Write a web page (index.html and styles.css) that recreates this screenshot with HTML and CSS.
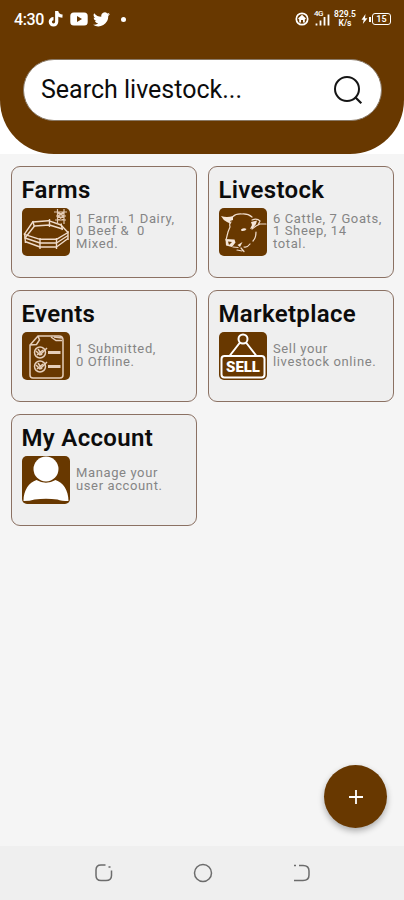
FILE: index.html
```html
<!DOCTYPE html>
<html lang="en">
<head>
  <meta charset="UTF-8" />
  <meta name="viewport" content="width=device-width, initial-scale=1.0"/>
  <title>Livestock</title>
  <link rel="stylesheet" href="styles.css">
</head>
<body>
  <div class="app">
    <div class="header-wrap">
      <header class="header">
        <div class="status-bar">
          <span class="time">4:30</span>
          <svg class="tiktok" width="16" height="18" viewBox="0 0 16 18"><path d="M8.7 1v10.8a3.2 3.2 0 1 1-3.2-3.2M8.7 1.2c.4 3 2.6 4.8 5.8 5" fill="none" stroke="#fff" stroke-width="3.2"/></svg>
          <svg class="youtube" width="18" height="14" viewBox="0 0 18 14"><rect x=".3" y=".5" width="17.4" height="13" rx="3.5" fill="#fff"/><path d="M7 4v6l5-3z" fill="#683800"/></svg>
          <svg class="twitter" width="17" height="15" viewBox="0 0 24 20"><path d="M24 2.4a10 10 0 0 1-2.8.8A5 5 0 0 0 23.3.5a10 10 0 0 1-3.1 1.2 4.9 4.9 0 0 0-8.4 4.5A14 14 0 0 1 1.7 1a4.9 4.9 0 0 0 1.5 6.6 5 5 0 0 1-2.2-.6 4.9 4.9 0 0 0 3.9 4.9 5 5 0 0 1-2.2.1 4.9 4.9 0 0 0 4.6 3.4A10 10 0 0 1 0 17.5 14 14 0 0 0 21.5 5a10 10 0 0 0 2.5-2.6z" fill="#fff"/></svg>
          <span class="dot"></span>
          <div class="status-right">
            <svg width="14" height="14" viewBox="0 0 14 14"><circle cx="7" cy="7" r="5.7" fill="none" stroke="#fff" stroke-width="1.7"/><path d="M7 2.8l4 3.8-1.200.8v3H8V8H6v2.400H4.200v-3L3 6.600z" fill="#fff"/></svg>
            <div class="signal">
              <span>4G</span>
              <svg width="17" height="16" viewBox="0 0 17 16"><path d="M2.5 12.5v2M6.500 9.500v5M10.500 6v8.500M14.500 3.500v11" stroke="#fff" stroke-width="1.800" fill="none"/></svg>
            </div>
            <div class="speed">829.5<br>K/s</div>
            <div class="battery">
              <svg width="8" height="12" viewBox="0 0 8 12"><path d="M4.500 1L.5 6.800h2.200L1.800 11 6.500 5.200H4z" fill="#fff"/></svg>
              <span class="battery-tip"></span>
              <span class="battery-body">15</span>
            </div>
          </div>
        </div>
        <div class="search">
          <span>Search livestock...</span>
          <svg width="30" height="30" viewBox="0 0 30 30"><circle cx="14" cy="14" r="12" fill="none" stroke="#151515" stroke-width="2"/><path d="M22.300 22.300l6 6" stroke="#151515" stroke-width="2.200"/></svg>
        </div>
      </header>
    </div>

    <main class="cards">
      <section class="card">
        <h2>Farms</h2>
        <div class="card-row">
          <svg class="icon" viewBox="0 0 48 48">
            <g fill="none" stroke="#f0dccb" stroke-width="1.400" stroke-linejoin="round">
              <path d="M10.700 14L26.500 12.700 39 17 46 24.500 34.500 31.300H18L2.300 26.300z"/>
              <path d="M12.500 18l15-1 13 4M46 30.500L34.500 39H18L3 33.500"/>
              <path d="M46 27.500L34.500 35H18L3 30l9.500-12"/>
              <path d="M10.700 13l1.800 6M27.500 11v8M39 15.500l1.500 6.500M46 23v9M34.500 30v11M18 30v11M2.500 25l1 10"/>
            </g>
            <g fill="none" stroke="#e3c9b2" stroke-width="1.200">
              <path d="M35.500 1v15M42 1v15M32 4h13M34 8h10M33 12h11M35.500 4l6.500 4-6.500 4M42 4l-6.500 4 6.500 4"/>
            </g>
          </svg>
          <p>1 Farm. 1 Dairy,<br>0 Beef &amp;&nbsp; 0<br>Mixed.</p>
        </div>
      </section>

      <section class="card">
        <h2>Livestock</h2>
        <div class="card-row">
          <svg class="icon" viewBox="0 0 48 48">
            <g fill="#f5e6d9">
              <path d="M2 8q6 2 12 0v4l-3 1 1 3-4-2q-4-2-6-6z"/>
              <path d="M32 14l6-1.500-1 3.500-3 4-3 1 2-4z"/>
              <path d="M22 21.500q3-2 5.500-.5-1 2.500-5 2z"/>
              <path d="M6.500 31l9 .5 1 3-3.500 4.500-6-1.500z"/>
              <path d="M18.500 37l5-3-2.500 5z"/>
            </g>
            <path d="M9 33.500l4 .5-3 3z" fill="#683800"/>
            <g fill="none" stroke="#f0dccb" stroke-width="1.200" stroke-linecap="round">
              <path d="M14 8.500q3-3 9-2.500 6-.5 10 3"/>
              <path d="M12 14q-2 1-1 5l-2 5-2 8"/>
              <path d="M33 21l4-3 4-2h6M33 12q5-2 8 1l-2 4"/>
              <path d="M37 24q0 6-3 9M31 36q-3 4-6 3"/>
              <path d="M14 39l5 .5M18 42l5 1M22 40l3 3.500"/>
            </g>
          </svg>
          <p>6 Cattle, 7 Goats,<br>1 Sheep, 14<br>total.</p>
        </div>
      </section>

      <section class="card">
        <h2>Events</h2>
        <div class="card-row">
          <svg class="icon" viewBox="0 0 48 48">
            <g fill="none" stroke="#e6cfba" stroke-width="1.500">
              <path d="M16 4h21q4 0 4 4v35q0 3-3 3H11q-3 0-3-3V13zM16 4l1.500 4-3 4.500L8 13"/>
              <path d="M29 5l5 3.500h6M32 5l8 1"/>
              <circle cx="18" cy="20.500" r="5.500"/>
              <circle cx="18" cy="34.500" r="5.500"/>
              <path d="M14 19l4 4 7-7M15 23l6-5M16 17l4 6M14 33l4 4 7-7M15 37l6-5M16 31l4 6"/>
              <path d="M26 20.500h12.500M26 34.500h12.500" stroke-width="3"/>
            </g>
          </svg>
          <p>1 Submitted,<br>0 Offline.</p>
        </div>
      </section>

      <section class="card">
        <h2>Marketplace</h2>
        <div class="card-row">
          <svg class="icon" viewBox="0 0 48 48">
            <g fill="none" stroke="#fff" stroke-width="2">
              <circle cx="24" cy="7" r="4.500"/>
              <path d="M21 10.500L10.500 24M27 10.500L37.500 24"/>
              <rect x="2.500" y="24" width="43" height="21.500" rx="3"/>
            </g>
            <text class="sell" x="7" y="39.500" textLength="34" lengthAdjust="spacingAndGlyphs">SELL</text>
          </svg>
          <p>Sell your<br>livestock online.</p>
        </div>
      </section>

      <section class="card">
        <h2>My Account</h2>
        <div class="card-row">
          <svg class="icon" viewBox="0 0 48 48">
            <circle cx="24" cy="13" r="12.500" fill="#fff"/>
            <path d="M1.500 45C1.500 34 7 26.500 14.500 24q9.500 5.500 19 0C41 26.500 46.500 34 46.500 45q-7 0-11-1.500-11.500-1.500-23 0Q8 45 1.500 45z" fill="#fff"/>
          </svg>
          <p>Manage your<br>user account.</p>
        </div>
      </section>
    </main>

    <nav class="nav-bar">
      <svg width="20" height="20" viewBox="0 0 20 20"><path d="M11.500 2H7Q2 2 2 7v5.500q0 5 5 5h5q5.500 0 5.500-5V7.500M14.500 4h2" fill="none" stroke="#6c6c6c" stroke-width="1.500"/></svg>
      <svg width="20" height="20" viewBox="0 0 20 20"><circle cx="10" cy="10" r="8.500" fill="none" stroke="#6c6c6c" stroke-width="1.500"/></svg>
      <svg width="20" height="20" viewBox="0 0 20 20"><path d="M7 2.500h4q6 0 6 5.500v4q0 5.500-6 5.500H2M2 2.500h2" fill="none" stroke="#6c6c6c" stroke-width="1.500"/></svg>
    </nav>

    <button class="fab" aria-label="Add">
      <svg width="14" height="14" viewBox="0 0 14 14"><path d="M7 0v14M0 7h14" stroke="#fff" stroke-width="1.800"/></svg>
    </button>
  </div>
</body>
</html>
```
FILE: styles.css
```css
* {
  box-sizing: border-box;
}
body {
  margin: 0;
  font-family: Roboto, sans-serif;
  background: #f5f5f5;
  color: #0c0c0c;
}
.app {
  position: relative;
  display: flex;
  flex-direction: column;
  height: 900px;
  overflow: hidden;
}
.header-wrap {
  background: #fff;
}
.header {
  height: 154px;
  background: #683800;
  border-radius: 0 0 54px 54px;
}
.status-bar {
  display: flex;
  align-items: center;
  height: 38px;
  padding: 0 13px 0 14px;
  color: #fff;
}
.time {
  width: 31px;
  font-size: 16px;
  font-weight: 500;
  letter-spacing: -0.4px;
}
.tiktok {
  margin-left: 3px;
}
.youtube {
  margin-left: 6px;
}
.twitter {
  margin-left: 5px;
}
.dot {
  width: 5px;
  height: 5px;
  margin-left: 11px;
  border-radius: 50%;
  background: #fff;
}
.status-right {
  display: flex;
  align-items: center;
  margin-left: auto;
}
.signal {
  position: relative;
  height: 16px;
  margin-left: 5px;
}
.signal span {
  position: absolute;
  top: -1px;
  left: 0;
  font-size: 8px;
  line-height: 8px;
  font-weight: 500;
  letter-spacing: -0.5px;
}
.signal svg {
  display: block;
}
.speed {
  width: 24px;
  margin-left: 2px;
  font-size: 8.5px;
  line-height: 9px;
  font-weight: 600;
  text-align: center;
}
.battery {
  display: flex;
  align-items: center;
  margin-left: 4px;
}
.battery-tip {
  width: 2px;
  height: 5px;
  background: #fff;
}
.battery-body {
  width: 19px;
  height: 12px;
  margin-left: 1px;
  border: 1.5px solid #fff;
  border-radius: 3px;
  font-size: 9px;
  line-height: 10px;
  font-weight: 600;
  text-align: center;
}
.search {
  display: flex;
  align-items: center;
  justify-content: space-between;
  height: 62px;
  margin: 21px 22px 0 23px;
  padding: 0 18px 0 17px;
  border: 1px solid #8a7a68;
  border-radius: 31px;
  background: #fff;
  font-size: 25px;
}
.search span {
  margin-bottom: 2px;
}
.cards {
  flex: 1;
  display: grid;
  grid-template-columns: 186px 186px;
  grid-auto-rows: 112px;
  gap: 12px 11px;
  padding: 12px 11px;
}
.card {
  padding: 9px 0 0 10px;
  border: 1px solid #8b7163;
  border-radius: 9px;
  background: #efefef;
}
.card h2 {
  margin: 0 0 0 -0.5px;
  font-size: 24px;
  line-height: 28px;
  font-weight: 600;
  letter-spacing: 0.32px;
}
.card-row {
  display: flex;
  align-items: center;
  gap: 6px;
  margin-top: 4px;
}
.card p {
  margin: 0 0 1px;
  color: #858585;
  font-size: 13px;
  line-height: 12.4px;
  letter-spacing: 0.62px;
  white-space: nowrap;
}
.icon {
  flex: none;
  width: 48px;
  height: 48px;
  border-radius: 5px;
  background: #683800;
}
.sell {
  font-family: Roboto, sans-serif;
  font-size: 14px;
  font-weight: 900;
  fill: #fff;
}
.nav-bar {
  display: flex;
  align-items: center;
  justify-content: center;
  gap: 79px;
  height: 54px;
  padding-left: 2px;
  background: #efefef;
}
.fab {
  position: absolute;
  right: 17px;
  bottom: 72px;
  display: flex;
  align-items: center;
  justify-content: center;
  width: 63px;
  height: 63px;
  padding: 0;
  border: none;
  border-radius: 50%;
  background: #683800;
  box-shadow: 0 3px 6px rgba(0,0,0,0.3);
}
```
